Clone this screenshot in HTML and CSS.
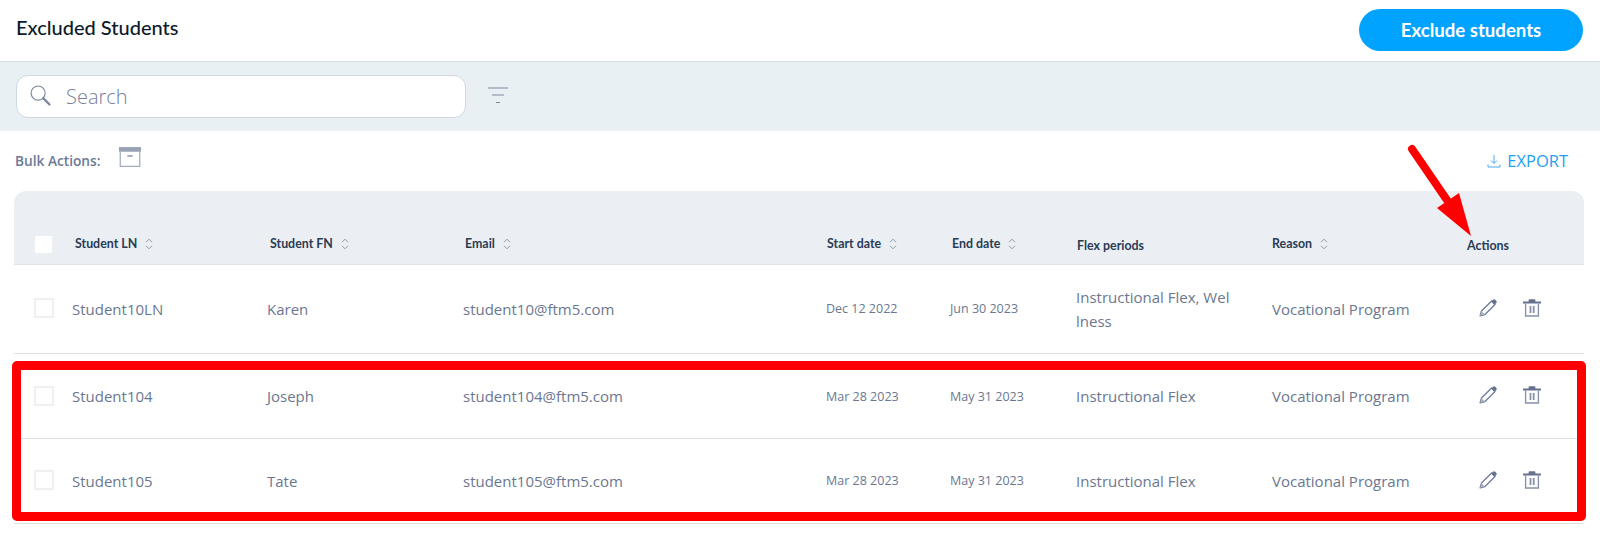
FILE: index.html
```html
<!DOCTYPE html>
<html lang="en">
<head>
<meta charset="utf-8">
<title>Excluded Students</title>
<link rel="stylesheet" href="styles.css">
</head>
<body>
<svg class="defs" width="0" height="0" aria-hidden="true">
  <symbol id="sort" viewBox="0 0 8 12"><path d="M1 4.2 4 1.2 7 4.2M1 7.8 4 10.8 7 7.8" fill="none" stroke="#8f9cae" stroke-width="1"/></symbol>
  <symbol id="pencil" viewBox="0 0 18 18"><path d="M1.2 16.8 2.5 12 12.6 2 16 5.4 6 15.5Z" fill="none" stroke="#727e99" stroke-width="1.4" stroke-linejoin="round"/><path d="M12.2 2.4 14 .8a1.6 1.6 0 0 1 2.2 0l1 1a1.6 1.6 0 0 1 0 2.2L15.6 5.8Z" fill="#65718d"/><path d="M2.5 12 6 15.5 1.2 16.8Z" fill="#aab3c4"/></symbol>
  <symbol id="trash" viewBox="0 0 18 18"><path d="M0 2.6h18v1.8H0zM5.6 1.2Q5.6 .2 6.6 .2h4.8q1 0 1 1V3H5.6z" fill="#65718d"/><path d="M2.6 4.5V17h12.8V4.5" fill="none" stroke="#8791a9" stroke-width="1.4"/><path d="M6.6 7h1.8v7H6.6zM9.8 7h1.8v7H9.8z" fill="#8791a9"/></symbol>
</svg>
<header class="topbar">
  <h1 class="title">Excluded Students</h1>
  <button class="primary">Exclude students</button>
</header>
<section class="toolbar">
  <div class="search">
    <svg class="search-icon" viewBox="0 0 22 22" width="21" height="21"><circle cx="8.5" cy="8.5" r="7.4" fill="none" stroke="#7b879e" stroke-width="1.2"/><path d="M13.8 13.8 20.4 20.4" stroke="#7b879e" stroke-width="2.4" stroke-linecap="round"/></svg>
    <span class="placeholder">Search</span>
  </div>
  <svg class="filter" viewBox="0 0 20 17" width="20" height="17"><path d="M0 1h20M4 8h12M8 15.5h4" stroke="#7d899f" stroke-width="1.2"/></svg>
</section>
<section class="actions-bar">
  <div class="bulk">
    <span class="bulk-label">Bulk Actions:</span>
    <svg class="archive" viewBox="0 0 21 19" width="22" height="20"><rect x="0" y="0" width="21" height="4.5" fill="#9aa3b6"/><path d="M1.2 4.5V18.4H19.8V4.5" fill="none" stroke="#a4adbf" stroke-width="1.2"/><path d="M8 8.5h5" stroke="#8791a9" stroke-width="1.4"/></svg>
  </div>
  <a class="export"><svg viewBox="0 0 14 14" width="14" height="14"><path d="M7 1v8M4 6.5 7 9.5 10 6.5M1 10.5V13h12v-2.5" fill="none" stroke="#4aa8f0" stroke-width="1"/></svg>EXPORT</a>
</section>
<section class="table">
  <div class="thead">
    <span class="hcheck"></span>
    <span class="th">Student LN <svg class="s"><use href="#sort"/></svg></span>
    <span class="th">Student FN <svg class="s"><use href="#sort"/></svg></span>
    <span class="th">Email <svg class="s"><use href="#sort"/></svg></span>
    <span class="th">Start date <svg class="s"><use href="#sort"/></svg></span>
    <span class="th">End date <svg class="s"><use href="#sort"/></svg></span>
    <span class="th low">Flex periods</span>
    <span class="th">Reason <svg class="s"><use href="#sort"/></svg></span>
    <span class="th low">Actions</span>
  </div>
  <div class="row r1">
    <span class="check"></span><span>Student10LN</span><span>Karen</span><span>student10@ftm5.com</span><span class="date">Dec 12 2022</span><span class="date">Jun 30 2023</span><span class="flex">Instructional Flex, Wel<br>lness</span><span>Vocational Program</span>
    <span class="ico"><svg width="18" height="18"><use href="#pencil"/></svg><svg width="18" height="18"><use href="#trash"/></svg></span>
  </div>
  <div class="row r2">
    <span class="check"></span><span>Student104</span><span>Joseph</span><span>student104@ftm5.com</span><span class="date">Mar 28 2023</span><span class="date">May 31 2023</span><span class="flex">Instructional Flex</span><span>Vocational Program</span>
    <span class="ico"><svg width="18" height="18"><use href="#pencil"/></svg><svg width="18" height="18"><use href="#trash"/></svg></span>
  </div>
  <div class="row r3">
    <span class="check"></span><span>Student105</span><span>Tate</span><span>student105@ftm5.com</span><span class="date">Mar 28 2023</span><span class="date">May 31 2023</span><span class="flex">Instructional Flex</span><span>Vocational Program</span>
    <span class="ico"><svg width="18" height="18"><use href="#pencil"/></svg><svg width="18" height="18"><use href="#trash"/></svg></span>
  </div>
</section>
<div class="mark-box"></div>
<svg class="mark-arrow" viewBox="0 0 80 100" width="80" height="100"><path d="M8 6 45 60" stroke="#f00" stroke-width="8" stroke-linecap="round"/><path d="M67 93 33 65 55 50Z" fill="#f00"/></svg>
</body>
</html>
```
FILE: styles.css
```css
* { box-sizing: border-box; }
html, body { margin: 0; padding: 0; }
body { width: 1600px; height: 544px; overflow: hidden; background: #fff; font-family: "Open Sans", sans-serif; color: #6b7791; position: relative; }
.defs { position: absolute; }
.topbar { height: 62px; padding: 9px 17px 0 16px; display: flex; justify-content: space-between; align-items: flex-start; border-bottom: 1px solid #d3dbe2; }
.title { margin: 3px 0 0; font: 500 20px/30px Lato, sans-serif; color: #0c1a2b; }
.primary { width: 224px; height: 42px; border: 0; border-radius: 21px; background: #00a3ff; color: #fff; font: 700 18.6px/24px Lato, sans-serif; padding: 0; }
.toolbar { height: 69px; background: #e9f0f4; padding: 13px 16px 0; display: flex; align-items: flex-start; gap: 22px; }
.search { width: 450px; height: 43px; background: #fff; border: 1px solid #cfd8e2; border-radius: 12px; display: flex; align-items: center; padding-left: 13px; gap: 15px; }
.search-icon { margin-top: -3px; }
.placeholder { font: 300 20px/28px "Open Sans", sans-serif; color: #75819a; }
.filter { margin-top: 12px; }
.actions-bar { height: 60px; padding: 16px 32px 0 15px; display: flex; justify-content: space-between; align-items: flex-start; }
.bulk { display: flex; align-items: flex-start; gap: 19px; }
.bulk-label { margin-top: 4px; font: 600 13.7px/20px "Open Sans", sans-serif; color: #6b7a96; }
.export { margin-top: 4px; display: flex; align-items: center; gap: 6px; font: 500 16.5px/20px "Open Sans", sans-serif; color: #1f9ff5; }
.table { margin: 0 16px 0 14px; }
.thead { height: 74px; background: #ebeff3; border-radius: 12px 12px 0 0; border-bottom: 1px solid #dfe4e9; display: grid; grid-template-columns: 61px 195px 195px 362px 125px 125px 195px 195px 1fr; align-items: center; padding-top: 33px; }
.hcheck { width: 17px; height: 17px; background: #fff; margin-left: 21px; }
.th { font: 700 12.4px/16px Lato, sans-serif; color: #2a3b55; display: flex; align-items: center; gap: 8px; }
.th.low { padding-top: 4px; }
.s { width: 8px; height: 12px; }
.row { display: grid; grid-template-columns: 58px 195px 196px 363px 124px 126px 196px 198px 1fr; align-items: start; border-bottom: 1px solid #e0e2e5; font: 400 15px/24px "Open Sans", sans-serif; color: #6b7791; }
.r1 { height: 89px; padding-top: 32px; }
.r2 { height: 85px; padding-top: 30px; }
.r3 { height: 85px; padding-top: 30px; }
.check { width: 20px; height: 20px; margin: 2px 0 0 20px; background: #fff; border: 2px solid #f0f0f0; }
.r1 .check { margin-top: 1px; }
.r3 .check { margin-top: 1px; }
.date { font-size: 12.5px; }
.r2 .date { margin-top: 1px; }
.r1 .flex { margin-top: -12px; }
.ico { display: flex; gap: 26px; margin-left: 9px; margin-top: 2px; }
.mark-box { position: absolute; left: 12px; top: 361px; width: 1574px; height: 160px; border: 9px solid #f00; border-radius: 5px; }
.mark-arrow { position: absolute; left: 1404px; top: 143px; }
```
